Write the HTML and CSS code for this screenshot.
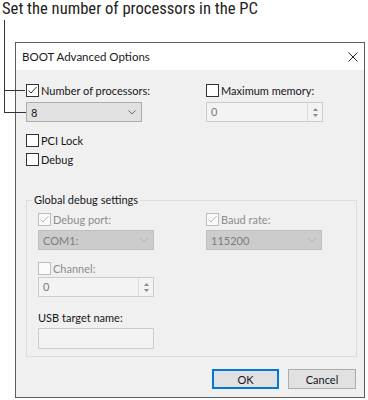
FILE: index.html
```html
<!DOCTYPE html>
<html lang="en">
<head>
  <meta charset="UTF-8">
  <meta name="viewport" content="width=device-width, initial-scale=1.0">
  <title>BOOT Advanced Options</title>
  <link rel="stylesheet" href="styles.css">
</head>
<body>
  <div class="page">
    <p class="caption">Set the number of processors in the PC</p>

    <!-- callout lines pointing at the processor fields -->
    <span class="callout-stem"></span>
    <span class="callout-tick tick-check"></span>
    <span class="callout-tick tick-select"></span>

    <div class="dialog">
      <div class="titlebar">
        <span class="title">BOOT Advanced Options</span>
        <svg class="close" width="10" height="10" viewBox="0 0 10 10">
          <path d="M0.5 0.5 L9.5 9.5 M9.5 0.5 L0.5 9.5" stroke="#222" stroke-width="1" fill="none"/>
        </svg>
      </div>

      <div class="dialog-body">
        <div class="two-col">
          <label class="check">
            <span class="box">
              <svg width="11" height="11" viewBox="0 0 11 11"><polyline points="1.5,5.5 4,8 9.5,2" fill="none" stroke="#333" stroke-width="1"/></svg>
            </span>
            Number of processors:
          </label>
          <label class="check">
            <span class="box"></span>
            Maximum memory:
          </label>

          <div class="combo">
            <span>8</span>
            <svg width="8" height="5" viewBox="0 0 8 5"><polyline points="0.5,0.5 4,4 7.5,0.5" fill="none" stroke="#666" stroke-width="1"/></svg>
          </div>
          <div class="spin">
            <span class="spin-value">0</span>
            <span class="spin-arrows">
              <svg width="5" height="9" viewBox="0 0 5 9"><path d="M2.5 0 L5 3 L0 3 Z M0 6 L5 6 L2.5 9 Z" fill="#8a8a8a"/></svg>
            </span>
          </div>
        </div>

        <label class="check single first">
          <span class="box"></span>
          PCI Lock
        </label>
        <label class="check single">
          <span class="box"></span>
          Debug
        </label>

        <fieldset class="group">
          <legend>Global debug settings</legend>
          <div class="two-col group-cols">
            <label class="check off">
              <span class="box">
                <svg width="11" height="11" viewBox="0 0 11 11"><polyline points="1.5,5.5 4,8 9.5,2" fill="none" stroke="#b8b8b8" stroke-width="1"/></svg>
              </span>
              Debug port:
            </label>
            <label class="check off">
              <span class="box">
                <svg width="11" height="11" viewBox="0 0 11 11"><polyline points="1.5,5.5 4,8 9.5,2" fill="none" stroke="#b8b8b8" stroke-width="1"/></svg>
              </span>
              Baud rate:
            </label>

            <div class="combo disabled">
              <span>COM1:</span>
              <svg width="8" height="5" viewBox="0 0 8 5"><polyline points="0.5,0.5 4,4 7.5,0.5" fill="none" stroke="#b0b0b0" stroke-width="1"/></svg>
            </div>
            <div class="combo disabled">
              <span>115200</span>
              <svg width="8" height="5" viewBox="0 0 8 5"><polyline points="0.5,0.5 4,4 7.5,0.5" fill="none" stroke="#b0b0b0" stroke-width="1"/></svg>
            </div>
          </div>

          <label class="check off channel">
            <span class="box"></span>
            Channel:
          </label>
          <div class="spin narrow">
            <span class="spin-value">0</span>
            <span class="spin-arrows">
              <svg width="5" height="9" viewBox="0 0 5 9"><path d="M2.5 0 L5 3 L0 3 Z M0 6 L5 6 L2.5 9 Z" fill="#8a8a8a"/></svg>
            </span>
          </div>

          <div class="field-label">USB target name:</div>
          <div class="textbox"></div>
        </fieldset>

        <div class="buttons">
          <button class="btn default">OK</button>
          <button class="btn">Cancel</button>
        </div>
      </div>
    </div>
  </div>
</body>
</html>
```

FILE: styles.css
```css
body {
  margin: 0;
  background: #fff;
  font-family: Lato, "Noto Sans", sans-serif;
  font-size: 11px;
  color: #161620;
}

.page {
  position: relative;
  width: 368px;
  height: 400px;
  overflow: hidden;
}

.caption {
  margin: 0;
  padding-left: 2px;
  height: 18px;
  line-height: 18px;
  font-family: "Liberation Sans Narrow", "Roboto Condensed", Roboto, sans-serif;
  font-size: 16.6px;
  color: #222;
}

/* callout */
.callout-stem {
  position: absolute;
  left: 4px;
  top: 20px;
  width: 1px;
  height: 93px;
  background: #333;
}

.callout-tick {
  position: absolute;
  left: 4px;
  width: 21px;
  height: 1px;
  background: #333;
}

.tick-check { top: 90px; }
.tick-select { top: 112px; width: 22px; }

/* dialog */
.dialog {
  margin: 24px 0 0 15px;
  width: 350px;
  height: 356px;
  box-sizing: border-box;
  border: 1px solid #5c5c5c;
  background: #f0f0f0;
  display: flex;
  flex-direction: column;
}

.titlebar {
  height: 27px;
  background: #fff;
  display: flex;
  align-items: center;
  justify-content: space-between;
  padding: 0 6px;
  font-size: 11.5px;
  color: #1a1a1a;
}

.dialog-body {
  flex: 1;
  padding: 12px 7px 0 10px;
  display: flex;
  flex-direction: column;
}

.two-col {
  display: grid;
  grid-template-columns: 180px 117px;
  row-gap: 4px;
}

.check {
  display: flex;
  align-items: center;
  height: 16px;
  gap: 2px;
}

.box {
  width: 11px;
  height: 11px;
  border: 1px solid #333;
  background: #fff;
  display: flex;
}

.check.off {
  color: #8c8c8c;
}

.check.off .box {
  border-color: #bcbcbc;
  background: #fbfbfb;
}

.check.single.first { margin-top: 10px; }
.check.single { margin-top: 3px; }

.combo {
  width: 116px;
  height: 20px;
  box-sizing: border-box;
  border: 1px solid #adadad;
  background: #e1e1e1;
  display: flex;
  align-items: center;
  justify-content: space-between;
  padding: 0 5px 0 4px;
}

.combo.disabled {
  background: #cccccc;
  border-color: #bfbfbf;
  color: #7d7d7d;
}

.spin {
  width: 117px;
  height: 20px;
  box-sizing: border-box;
  border: 1px solid #cccccc;
  background: #f3f3f3;
  display: flex;
  color: #7a7a7a;
}

.spin.narrow { width: 116px; }

.spin-value {
  flex: 1;
  padding-left: 4px;
  line-height: 18px;
}

.spin-arrows {
  width: 14px;
  border-left: 1px solid #dcdcdc;
  display: flex;
  align-items: center;
  justify-content: center;
}

.group {
  margin: 25px 0 0;
  padding: 3px 10px 7px 11px;
  border: 1px solid #dcdcdc;
}

.group legend {
  margin-left: -6px;
  padding: 0 2px;
  line-height: 16px;
  color: #161620;
}

.group-cols {
  grid-template-columns: 168px 117px;
  row-gap: 3px;
}

.check.channel { margin: 10px 0 1px; }

.field-label {
  margin-top: 13px;
  line-height: 16px;
}

.textbox {
  margin-top: 2px;
  width: 116px;
  height: 21px;
  box-sizing: border-box;
  border: 1px solid #cccccc;
  background: #f3f3f3;
}

.buttons {
  margin-top: 12px;
  padding-right: 1px;
  display: flex;
  justify-content: flex-end;
  gap: 9px;
}

.btn {
  width: 68px;
  height: 20px;
  box-sizing: border-box;
  border: 1px solid #adadad;
  background: #e1e1e1;
  font-family: inherit;
  font-size: 11px;
  color: #161620;
  padding: 0;
}

.btn.default {
  width: 67px;
  border: 2px solid #0078d7;
}
```
